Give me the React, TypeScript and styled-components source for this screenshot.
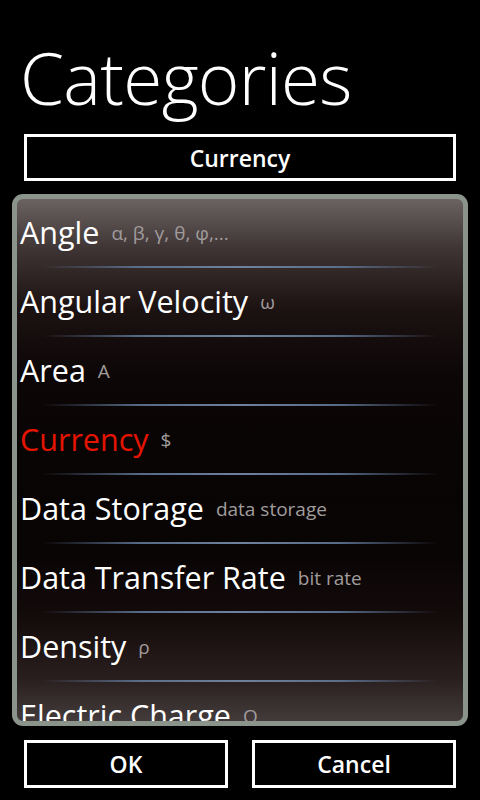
import styled, { createGlobalStyle } from "styled-components";

const GlobalStyle = createGlobalStyle`
  html, body {
    margin: 0;
    padding: 0;
    background: #000000;
    font-family: "Open Sans", "Noto Sans", sans-serif;
    color: #ffffff;
  }
`;

const Page = styled.div`
  width: 480px;
  height: 800px;
  display: flex;
  flex-direction: column;
  background: #000000;
  overflow: hidden;
`;

const Title = styled.h1`
  margin: 0;
  padding: 38px 0 0 20px;
  height: 96px;
  box-sizing: border-box;
  font-family: "Open Sans", sans-serif;
  font-weight: 300;
  font-size: 71px;
  line-height: 80px;
  letter-spacing: -0.7px;
  color: #ffffff;
`;

const FrameButton = styled.button`
  box-sizing: border-box;
  height: 48px;
  border: 3px solid #ffffff;
  background: #000000;
  color: #ffffff;
  font-family: "Open Sans", sans-serif;
  font-weight: 600;
  font-size: 23px;
  padding: 0;
  cursor: pointer;
`;

const Picker = styled(FrameButton)`
  margin: 38px 24px 0 24px;
  height: 47px;
`;

const Panel = styled.div`
  margin: 13px 12px 0 12px;
  height: 532px;
  box-sizing: border-box;
  border: 5px solid #8b948b;
  border-radius: 11px;
  overflow: hidden;
  background: linear-gradient(
    to bottom,
    #6b6262 0px,
    #3e3434 50px,
    #1c1212 110px,
    #0c0606 180px,
    #080404 300px,
    #0a0505 360px,
    #140b0b 420px,
    #2a1f1f 480px,
    #433b3b 522px
  );
`;

const Row = styled.div`
  position: relative;
  height: 69px;
  display: flex;
  align-items: baseline;
  padding: 13px 0 0 3px;
  box-sizing: border-box;
  white-space: nowrap;
`;

const Separator = styled.div`
  position: absolute;
  left: 25px;
  right: 25px;
  bottom: 0;
  height: 2px;
  background: linear-gradient(
    to right,
    rgba(90, 110, 140, 0) 0%,
    rgba(95, 118, 150, 0.9) 25%,
    rgba(110, 130, 160, 1) 50%,
    rgba(95, 118, 150, 0.9) 75%,
    rgba(90, 110, 140, 0) 100%
  );
`;

const Name = styled.span<{ $active?: boolean }>`
  font-family: "Open Sans", sans-serif;
  font-size: 30.5px;
  line-height: 40px;
  color: ${(p) => (p.$active ? "#e51400" : "#ffffff")};
`;

const Symbol = styled.span`
  margin-left: 12px;
  font-family: "Open Sans", sans-serif;
  font-size: 19px;
  color: #a09c9c;
  position: relative;
  top: -4px;
`;

const Footer = styled.div`
  display: flex;
  gap: 24px;
  padding: 14px 24px 0 24px;
  ${FrameButton} {
    flex: 1;
  }
`;

const categories = [
  { name: "Angle", symbol: "α, β, γ, θ, φ,..." },
  { name: "Angular Velocity", symbol: "ω" },
  { name: "Area", symbol: "A" },
  { name: "Currency", symbol: "$", active: true },
  { name: "Data Storage", symbol: "data storage" },
  { name: "Data Transfer Rate", symbol: "bit rate" },
  { name: "Density", symbol: "ρ" },
  { name: "Electric Charge", symbol: "Q" },
];

export default function App() {
  return (
    <Page>
      <GlobalStyle />
      <Title>Categories</Title>
      <Picker>Currency</Picker>
      <Panel>
        {categories.map((c) => (
          <Row key={c.name}>
            <Name $active={c.active}>{c.name}</Name>
            <Symbol>{c.symbol}</Symbol>
            <Separator />
          </Row>
        ))}
      </Panel>
      <Footer>
        <FrameButton>OK</FrameButton>
        <FrameButton>Cancel</FrameButton>
      </Footer>
    </Page>
  );
}
